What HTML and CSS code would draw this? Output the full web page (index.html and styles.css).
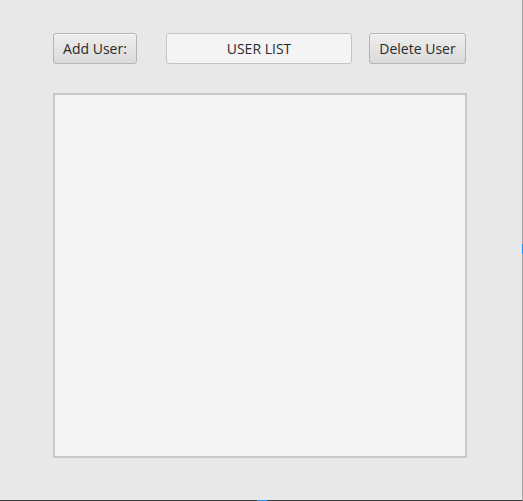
FILE: index.html
```html
<!DOCTYPE html>
<html>
<head>
<meta charset="utf-8">
<link rel="stylesheet" href="styles.css">
</head>
<body>
<div class="window">
  <div class="toolbar">
    <button class="btn btn-add">Add User:</button>
    <div class="field">USER LIST</div>
    <button class="btn btn-del">Delete User</button>
  </div>
  <div class="list"></div>
  <span class="mark-right"></span>
  <span class="mark-bottom"></span>
</div>
</body>
</html>
```

FILE: styles.css
```css
html, body {
  margin: 0;
  padding: 0;
  background: #e8e8e8;
  overflow: hidden;
}
.window {
  position: relative;
  width: 523px;
  height: 501px;
  box-sizing: border-box;
  border-right: 1px solid #a6a6a6;
  border-bottom: 1px solid #3c3c3c;
  background: #e8e8e8;
  font-family: "Open Sans", "Noto Sans", sans-serif;
  font-size: 14px;
  color: #2a2a2a;
}
.toolbar {
  display: flex;
  align-items: center;
  padding-top: 33px;
  padding-left: 53px;
}
.btn {
  box-sizing: border-box;
  height: 31px;
  border: 1px solid #b4b4b4;
  border-radius: 3px;
  background: linear-gradient(#eeeeee, #dadada);
  box-shadow: inset 0 1px 0 #f8f8f8;
  font-family: inherit;
  font-size: 14px;
  color: #2a2a2a;
  padding: 0;
  margin: 0;
}
.btn-add {
  width: 84px;
}
.field {
  box-sizing: border-box;
  width: 186px;
  height: 31px;
  margin-left: 29px;
  border: 1px solid #c4c4c4;
  border-radius: 3px;
  background: #f4f4f4;
  display: flex;
  align-items: center;
  justify-content: center;
}
.btn-del {
  width: 97px;
  margin-left: 17px;
}
.list {
  box-sizing: border-box;
  width: 414px;
  height: 365px;
  margin-top: 29px;
  margin-left: 53px;
  border: 2px solid #c8c8c8;
  background: #f4f4f4;
}
.mark-right {
  position: absolute;
  right: -1px;
  top: 244px;
  width: 1px;
  height: 10px;
  background: #1e90ff;
}
.mark-bottom {
  position: absolute;
  bottom: -1px;
  left: 257px;
  width: 10px;
  height: 1px;
  background: #1e90ff;
}
```
